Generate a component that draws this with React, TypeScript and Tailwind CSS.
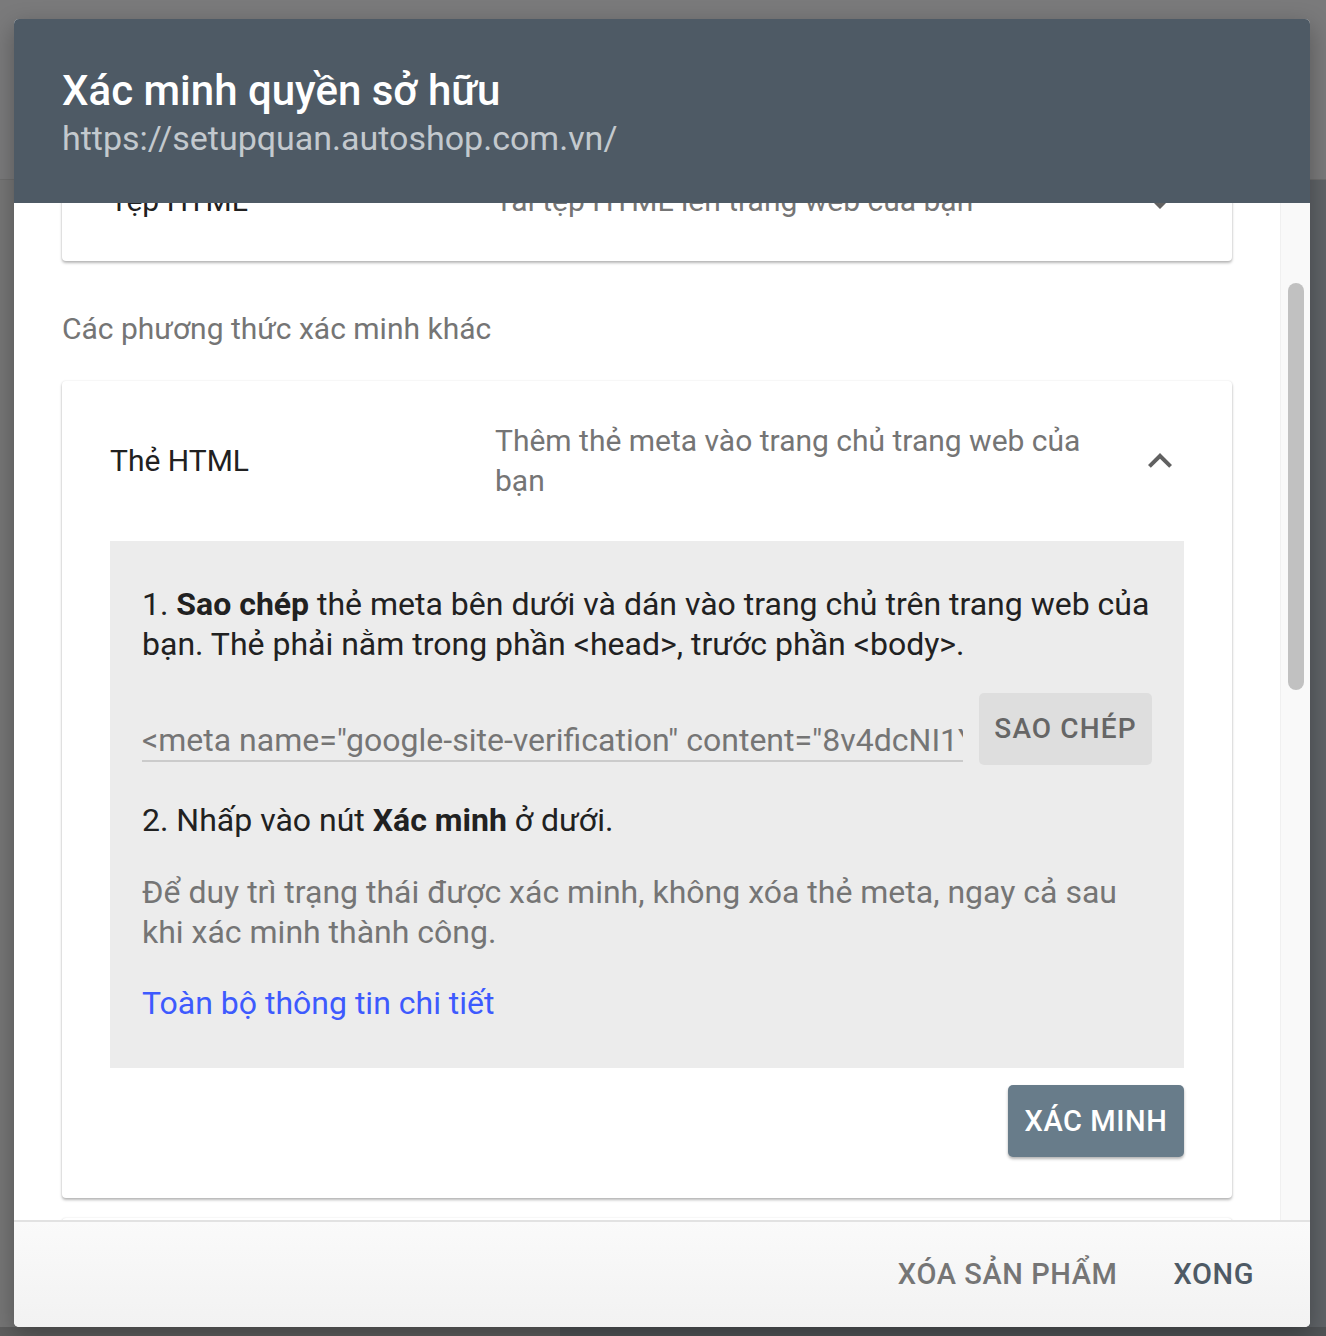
import { FC } from "react";

const ChevronUp: FC<{ className?: string }> = ({ className }) => (
  <svg viewBox="0 0 24 24" className={className} fill="currentColor">
    <path d="M7.41 15.41L12 10.83l4.59 4.58L18 14l-6-6-6 6z" />
  </svg>
);

const ChevronDown: FC<{ className?: string }> = ({ className }) => (
  <svg viewBox="0 0 24 24" className={className} fill="currentColor">
    <path d="M7.41 8.59L12 13.17l4.59-4.58L18 10l-6 6-6-6 1.41-1.41z" />
  </svg>
);

const cardShadow =
  "bg-white rounded-[4px] shadow-[0_2px_3px_rgba(0,0,0,0.28),0_0_2px_rgba(0,0,0,0.1)]";

export default function App() {
  return (
    <div className="relative w-[1326px] h-[1336px] overflow-hidden font-['Roboto','Liberation_Sans',sans-serif] flex flex-col bg-[#777777]">
      {/* page behind the overlay */}
      <div className="h-[180px] bg-[#7a7a7b] border-b border-[#6e6e6e]" />
      <div className="flex-1 flex">
        <div className="flex-1 bg-[#767676]" />
        <div className="w-[300px] bg-[#5f6367]" />
      </div>
      <div className="h-[9px] flex">
        <div className="w-[560px] bg-[#5e5e5e]" />
        <div className="flex-1 bg-[#505356]" />
      </div>

      {/* dialog */}
      <div className="absolute left-[14px] top-[19px] w-[1296px] h-[1308px] rounded-[5px] overflow-hidden flex flex-col bg-white shadow-[0_8px_24px_rgba(0,0,0,0.3)]">
        <div className="h-[184px] shrink-0 bg-[#4e5a65] px-[48px] pt-[47px]">
          <h1 className="text-[42px] leading-[50px] font-medium text-white">
            Xác minh quyền sở hữu
          </h1>
          <p className="mt-[2px] text-[34px] leading-[40px] text-[#c3c9ce]">
            https://setupquan.autoshop.com.vn/
          </p>
        </div>

        <div className="flex-1 flex min-h-0">
          <div className="flex-1 overflow-hidden px-[48px] text-[30px] leading-[40px]">
            {/* first method card, scrolled up under the header */}
            <div className={`${cardShadow} mt-[-62px] px-[48px] py-[40px] flex items-center`}>
              <div className="w-[385px] text-[#212121]">Tệp HTML</div>
              <div className="flex-1 text-[#757575]">Tải tệp HTML lên trang web của bạn</div>
              <ChevronDown className="w-[48px] h-[48px] -my-[4px] text-[#616161]" />
            </div>

            <p className="mt-[48px] text-[#757575]">Các phương thức xác minh khác</p>

            <div className={`${cardShadow} mt-[32px] px-[48px] pt-[40px] pb-[41px]`}>
              <div className="flex items-center">
                <div className="w-[385px] text-[#212121]">Thẻ HTML</div>
                <div className="flex-1 mr-[24px] text-[#757575]">
                  Thêm thẻ meta vào trang chủ trang web của bạn
                </div>
                <ChevronUp className="w-[48px] h-[48px] -my-[4px] text-[#616161]" />
              </div>

              <div className="mt-[40px] bg-[#ececec] px-[32px] pt-[43px] pb-[45px] text-[32px] text-[#212121]">
                <p>
                  1. <b className="font-bold">Sao chép</b> thẻ meta bên dưới và dán vào trang chủ trên
                  trang web của bạn. Thẻ phải nằm trong phần &lt;head&gt;, trước phần &lt;body&gt;.
                </p>
                <div className="mt-[29px] flex items-start gap-[16px]">
                  <div className="flex-1 min-w-0 pt-[27px]">
                    <div className="border-b-2 border-[#cbcbcb] text-[#757575] whitespace-nowrap overflow-hidden">
                      &lt;meta name="google-site-verification" content="8v4dcNI1YqXw3kPz0mJtR5uLbE2aHs9fGcVnD7oQ" /&gt;
                    </div>
                  </div>
                  <button className="w-[173px] h-[72px] shrink-0 rounded-[5px] bg-[#dedede] text-[#666666] text-[28px] font-medium tracking-[0.04em]">
                    SAO CHÉP
                  </button>
                </div>
                <p className="mt-[35px]">
                  2. Nhấp vào nút <b className="font-bold">Xác minh</b> ở dưới.
                </p>
                <p className="mt-[32px] text-[#757575]">
                  Để duy trì trạng thái được xác minh, không xóa thẻ meta, ngay cả sau khi xác minh
                  thành công.
                </p>
                <a className="mt-[31px] block text-[#3d5afe]">Toàn bộ thông tin chi tiết</a>
              </div>

              <div className="mt-[17px] flex justify-end">
                <button className="w-[176px] h-[72px] rounded-[5px] bg-[#687c8a] text-white text-[29px] font-medium tracking-[0.02em] shadow-[0_2px_3px_rgba(0,0,0,0.3)]">
                  XÁC MINH
                </button>
              </div>
            </div>

            <div className={`${cardShadow} mt-[20px] h-[120px]`} />
          </div>

          {/* scrollbar */}
          <div className="w-[30px] bg-[#f9f9f9] border-l border-[#f0f0f0] pt-[80px] pl-[7px]">
            <div className="w-[16px] h-[407px] rounded-full bg-[#c1c1c1]" />
          </div>
        </div>

        <div className="h-[107px] shrink-0 border-t-2 border-[#e2e2e2] bg-gradient-to-b from-[#fafafa] to-[#f2f2f2] flex justify-end items-center gap-[56px] pr-[56px] text-[29px] font-medium tracking-[0.02em]">
          <button className="text-[#757575]">XÓA SẢN PHẨM</button>
          <button className="text-[#4e5a65]">XONG</button>
        </div>
      </div>
    </div>
  );
}
